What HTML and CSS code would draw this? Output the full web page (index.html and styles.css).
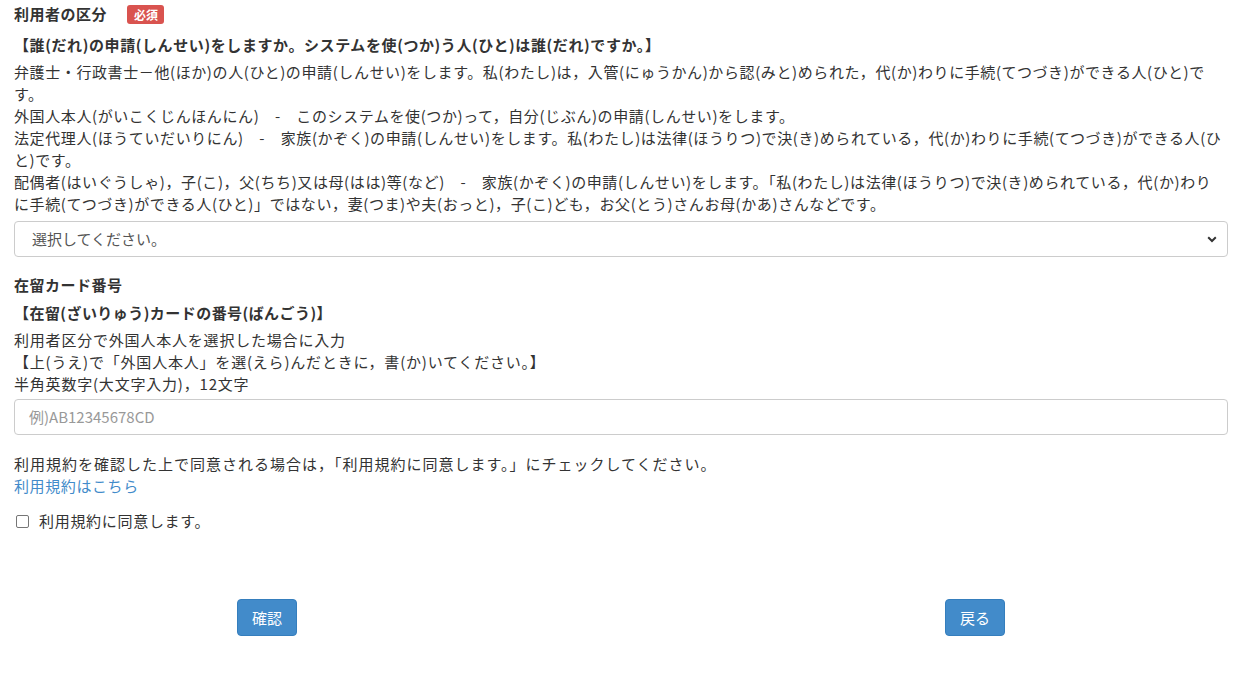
FILE: index.html
```html
<!DOCTYPE html>
<html lang="ja">
<head>
<meta charset="utf-8">
<title>利用者の区分</title>
<link rel="stylesheet" href="styles.css">
</head>
<body>
<div class="container">
  <div class="group">
    <div class="label-row with-badge">
      <span class="label">利用者の区分</span>
      <span class="badge">必須</span>
    </div>
    <div class="sub-label">【誰(だれ)の申請(しんせい)をしますか。システムを使(つか)う人(ひと)は誰(だれ)ですか。】</div>
    <div class="desc">
      <span class="ln">弁護士・行政書士－他(ほか)の人(ひと)の申請(しんせい)をします。私(わたし)は，入管(にゅうかん)から認(みと)められた，代(か)わりに手続(てつづき)ができる人(ひと)で</span>
      <span class="ln">す。</span>
      <span class="ln">外国人本人(がいこくじんほんにん)　-　このシステムを使(つか)って，自分(じぶん)の申請(しんせい)をします。</span>
      <span class="ln">法定代理人(ほうていだいりにん)　-　家族(かぞく)の申請(しんせい)をします。私(わたし)は法律(ほうりつ)で決(き)められている，代(か)わりに手続(てつづき)ができる人(ひ</span>
      <span class="ln">と)です。</span>
      <span class="ln">配偶者(はいぐうしゃ)，子(こ)，父(ちち)又は母(はは)等(など)　-　家族(かぞく)の申請(しんせい)をします。「私(わたし)は法律(ほうりつ)で決(き)められている，代(か)わり</span>
      <span class="ln">に手続(てつづき)ができる人(ひと)」ではない，妻(つま)や夫(おっと)，子(こ)ども，お父(とう)さんお母(かあ)さんなどです。</span>
    </div>
    <div class="select">
      <span>選択してください。</span>
      <svg class="chev" width="10" height="7" viewBox="0 0 10 7"><path d="M1.2 1.3 L5 5 L8.8 1.3" fill="none" stroke="#333" stroke-width="2"/></svg>
    </div>
  </div>

  <div class="group second">
    <div class="label-row"><span class="label">在留カード番号</span></div>
    <div class="sub-label">【在留(ざいりゅう)カードの番号(ばんごう)】</div>
    <div class="desc">
      <span class="ln">利用者区分で外国人本人を選択した場合に入力</span>
      <span class="ln">【上(うえ)で「外国人本人」を選(えら)んだときに，書(か)いてください。】</span>
      <span class="ln">半角英数字(大文字入力)，12文字</span>
    </div>
    <div class="input"><span class="placeholder">例)AB12345678CD</span></div>
  </div>

  <div class="terms">
    <div>利用規約を確認した上で同意される場合は，「利用規約に同意します。」にチェックしてください。</div>
    <a class="link" href="#">利用規約はこちら</a>
  </div>

  <label class="check">
    <span class="box"></span>
    <span class="check-text">利用規約に同意します。</span>
  </label>

  <div class="buttons">
    <span class="btn btn-left">確認</span>
    <span class="btn btn-right">戻る</span>
  </div>
</div>
</body>
</html>
```
FILE: styles.css
```css
html, body {
  margin: 0;
  padding: 0;
  background: #fff;
}
body {
  font-family: "Noto Sans CJK JP", "Noto Sans", sans-serif;
  font-size: 15px;
  line-height: 22px;
  color: #333;
}
.container {
  padding: 3px 32px 0 14px;
}
.label-row {
  display: flex;
  align-items: center;
  height: 22px;
}
.label-row.with-badge {
  padding-bottom: 3px;
}
.label {
  font-weight: bold;
  letter-spacing: 0.5px;
}
.badge {
  margin-left: 20px;
  background: #d9534f;
  color: #fff;
  font-size: 12px;
  font-weight: bold;
  line-height: 19px;
  padding: 0 6px 0 7px;
  border-radius: 3px;
}
.sub-label {
  font-weight: bold;
  margin-top: 6px;
  letter-spacing: 0.6px;
}
.second .sub-label {
  letter-spacing: 0.45px;
}
.desc {
  margin-top: 5px;
  letter-spacing: 0.6px;
}
.second .desc {
  letter-spacing: 0.8px;
}
.ln {
  display: block;
  white-space: nowrap;
}
.select, .input {
  height: 36px;
  box-sizing: border-box;
  border: 1px solid #ccc;
  border-radius: 4px;
  display: flex;
  align-items: center;
  justify-content: space-between;
  padding: 0 10px 0 17px;
  color: #555;
}
.select {
  margin-top: 6px;
}
.input {
  margin-top: 4px;
  padding-left: 14px;
}
.placeholder {
  color: #999;
}
.second {
  margin-top: 17px;
}
.terms {
  margin-top: 18px;
  letter-spacing: 1px;
}
.link {
  color: #428bca;
  text-decoration: none;
  letter-spacing: 0.6px;
}
.check {
  display: flex;
  align-items: center;
  margin-top: 13px;
  gap: 10px;
}
.check-text {
  letter-spacing: 0.7px;
}
.box {
  width: 11px;
  height: 11px;
  border: 1px solid #767676;
  border-radius: 2px;
  margin-left: 2px;
}
.buttons {
  display: grid;
  grid-template-columns: repeat(12, 1fr);
  margin-top: 67px;
}
.btn {
  background: #428bca;
  color: #fff;
  border: 1px solid #357ebd;
  border-radius: 4px;
  padding: 7px 14px;
  line-height: 21px;
  font-size: 15px;
  justify-self: center;
}
.btn-left {
  grid-column: 3;
}
.btn-right {
  grid-column: 10;
}
```
